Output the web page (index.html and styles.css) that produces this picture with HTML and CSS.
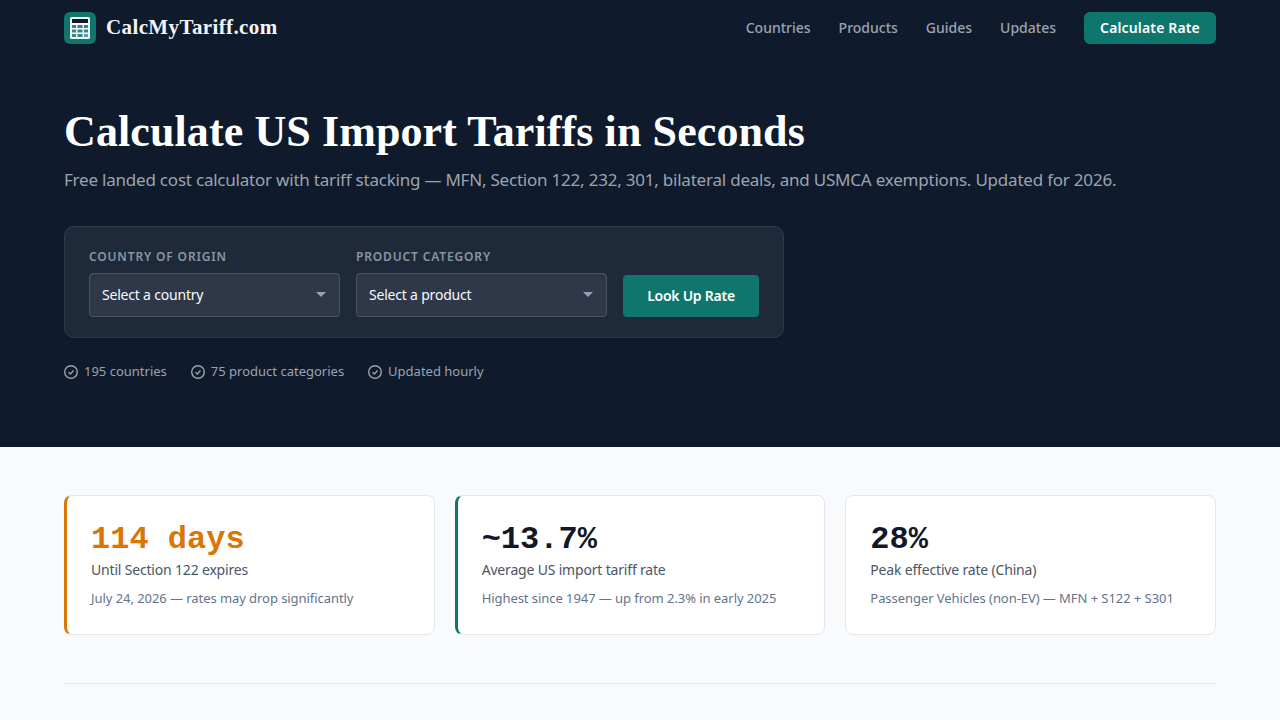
FILE: index.html
```html
<!DOCTYPE html>
<html lang="en">
<head>
<meta charset="utf-8">
<title>CalcMyTariff.com</title>
<link rel="stylesheet" href="styles.css">
</head>
<body>
<div class="top">
  <header class="nav">
    <a class="brand" href="#">
      <span class="logo">
        <svg width="20" height="22" viewBox="0 0 20 22">
          <rect width="20" height="22" rx="1.5" fill="#f8fafc"/>
          <rect x="2" y="2" width="16" height="4" fill="#0f1b2d"/>
          <g fill="#2f8a86">
            <rect x="2" y="8" width="4" height="3"/><rect x="7.5" y="8" width="5" height="3"/><rect x="14" y="8" width="4" height="3"/>
            <rect x="2" y="12.5" width="4" height="3"/><rect x="7.5" y="12.5" width="5" height="3"/><rect x="14" y="12.5" width="4" height="3"/>
            <rect x="2" y="17" width="4" height="3"/><rect x="7.5" y="17" width="5" height="3"/>
          </g>
          <rect x="14" y="17" width="4" height="3" fill="#5b9bc4"/>
        </svg>
      </span>
      <span class="brand-name">CalcMyTariff.com</span>
    </a>
    <nav class="links">
      <a href="#">Countries</a><a href="#">Products</a><a href="#">Guides</a><a href="#">Updates</a>
      <a class="cta" href="#">Calculate Rate</a>
    </nav>
  </header>
  <section class="hero">
    <h1>Calculate US Import Tariffs in Seconds</h1>
    <p class="sub">Free landed cost calculator with tariff stacking — MFN, Section 122, 232, 301, bilateral deals, and USMCA exemptions. Updated for 2026.</p>
    <form class="lookup">
      <div class="field">
        <label for="c">COUNTRY OF ORIGIN</label>
        <div class="select"><select id="c"><option>Select a country</option></select></div>
      </div>
      <div class="field">
        <label for="p">PRODUCT CATEGORY</label>
        <div class="select"><select id="p"><option>Select a product</option></select></div>
      </div>
      <button type="button" class="go">Look Up Rate</button>
    </form>
    <ul class="trust">
      <li><svg width="14" height="14" viewBox="0 0 14 14" fill="none" stroke="currentColor" stroke-width="1.4"><circle cx="7" cy="7" r="6.3"/><path d="M4.5 7.3l1.8 1.6 3.2-3.4"/></svg>195 countries</li>
      <li><svg width="14" height="14" viewBox="0 0 14 14" fill="none" stroke="currentColor" stroke-width="1.4"><circle cx="7" cy="7" r="6.3"/><path d="M4.5 7.3l1.8 1.6 3.2-3.4"/></svg>75 product categories</li>
      <li><svg width="14" height="14" viewBox="0 0 14 14" fill="none" stroke="currentColor" stroke-width="1.4"><circle cx="7" cy="7" r="6.3"/><path d="M4.5 7.3l1.8 1.6 3.2-3.4"/></svg>Updated hourly</li>
    </ul>
  </section>
</div>
<main class="main">
  <div class="stats">
    <div class="stat amber"><div class="val">114 days</div><div class="lbl">Until Section 122 expires</div><div class="note">July 24, 2026 — rates may drop significantly</div></div>
    <div class="stat teal"><div class="val">~13.7%</div><div class="lbl">Average US import tariff rate</div><div class="note">Highest since 1947 — up from 2.3% in early 2025</div></div>
    <div class="stat"><div class="val">28%</div><div class="lbl">Peak effective rate (China)</div><div class="note">Passenger Vehicles (non-EV) — MFN + S122 + S301</div></div>
  </div>
  <hr class="rule">
</main>
</body>
</html>
```
FILE: styles.css
```css
* { box-sizing: border-box; }
html, body { margin: 0; height: 720px; overflow: hidden; }
body { font-family: "Noto Sans", sans-serif; background: #f8fafc; color: #111827; }
a { text-decoration: none; color: inherit; }
.top { background: #0f1b2d; height: 447px; padding: 0 64px; }
.nav { height: 56px; display: flex; align-items: center; justify-content: space-between; }
.brand { display: flex; align-items: center; gap: 10px; }
.logo { width: 32px; height: 32px; border-radius: 6px; background: #0f766e; display: flex; align-items: center; justify-content: center; }
.brand-name { font-family: "Liberation Serif", serif; font-weight: 700; font-size: 21px; line-height: 28px; padding-bottom: 2px; color: #f1f5f9; letter-spacing: 0.38px; }
.links { display: flex; align-items: center; gap: 28px; font-size: 14px; font-weight: 500; color: #9ca3af; }
.links a { padding-bottom: 1px; }
.cta { background: #0f766e; color: #fff; font-weight: 600; width: 132px; height: 32px; justify-content: center; border-radius: 6px; display: flex; align-items: center; letter-spacing: 0.15px; }
.hero { padding-top: 48px; }
h1 { margin: 0; font-family: "Liberation Serif", serif; font-weight: 700; font-size: 44px; line-height: 56px; letter-spacing: 0.1px; color: #fff; }
.sub { margin: 8px 0 0; font-size: 17px; line-height: 24px; letter-spacing: -0.215px; color: #9ca3af; }
.lookup { margin-top: 34px; width: 720px; height: 112px; background: #1e2a3a; border: 1px solid #2f3b4c; border-radius: 10px; padding: 0 24px 20px; display: flex; align-items: flex-end; gap: 16px; }
.field { flex: 1; display: flex; flex-direction: column; gap: 8px; }
.field label { font-size: 12px; line-height: 16px; font-weight: 600; letter-spacing: 0.85px; color: #8b95a3; }
.select { position: relative; }
.select::after { content: ""; position: absolute; right: 14px; top: 19px; border: 5px solid transparent; border-top: 5px solid #94a3b8; border-bottom: 0; }
select { display: block; width: 100%; height: 44px; appearance: none; background: #2f3848; border: 1px solid #4b5563; border-radius: 4px; padding: 0 12px 2px; font: 14px "Noto Sans", sans-serif; letter-spacing: -0.2px; color: #f8fafc; }
.go { width: 136px; height: 42px; border: 0; border-radius: 4px; padding: 0 0 2px; background: #0f766e; color: #fff; font: 600 14px "Noto Sans", sans-serif; letter-spacing: -0.25px; }
.trust { list-style: none; margin: 24px 0 0; padding: 0; display: flex; gap: 24px; font-size: 13px; line-height: 18px; color: #9ca3af; }
.trust li { display: flex; align-items: center; gap: 6px; }
.trust svg { margin-top: 2px; }
.main { padding: 48px 64px 0; }
.stats { display: grid; grid-template-columns: repeat(3, 1fr); gap: 20px; }
.stat { height: 140px; background: #fff; border: 1px solid #e2e8f0; border-radius: 8px; padding: 24px; }
.amber { border-left: 3px solid #d97706; }
.teal { border-left: 3px solid #0f766e; }
.val { font-family: "Liberation Mono", monospace; font-weight: 700; font-size: 32px; line-height: 40px; color: #111827; }
.amber .val { color: #d97706; }
.lbl { font-size: 14px; line-height: 20px; letter-spacing: -0.18px; color: #4b5563; }
.note { margin-top: 8px; font-size: 13px; line-height: 20px; letter-spacing: -0.06px; color: #64748b; }
.rule { margin: 48px 0 0; border: 0; border-top: 1px solid #e2e8f0; }
```
